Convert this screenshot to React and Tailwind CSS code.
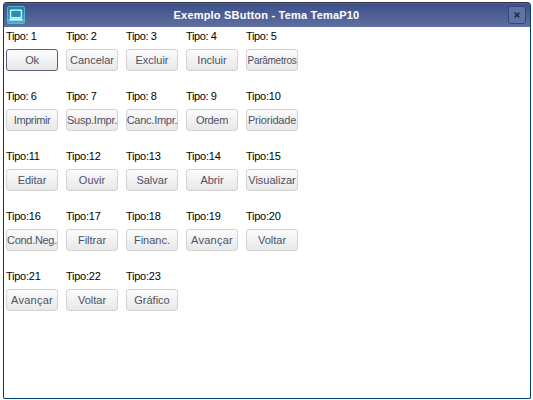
const buttons = [
  ["Tipo: 1", "Ok"], ["Tipo: 2", "Cancelar"], ["Tipo: 3", "Excluir"], ["Tipo: 4", "Incluir"], ["Tipo: 5", "Parâmetros"],
  ["Tipo: 6", "Imprimir"], ["Tipo: 7", "Susp.Impr."], ["Tipo: 8", "Canc.Impr."], ["Tipo: 9", "Ordem"], ["Tipo:10", "Prioridade"],
  ["Tipo:11", "Editar"], ["Tipo:12", "Ouvir"], ["Tipo:13", "Salvar"], ["Tipo:14", "Abrir"], ["Tipo:15", "Visualizar"],
  ["Tipo:16", "Cond.Neg."], ["Tipo:17", "Filtrar"], ["Tipo:18", "Financ."], ["Tipo:19", "Avançar"], ["Tipo:20", "Voltar"],
  ["Tipo:21", "Avançar"], ["Tipo:22", "Voltar"], ["Tipo:23", "Gráfico"],
];

// Letter spacing and size of the captions that need their own fit.
const captionFit = {
  "Ok": "text-[11px] tracking-[-0.3px]",
  "Parâmetros": "text-[10px] tracking-[-0.28px]",
  "Imprimir": "text-[11px] tracking-[-0.4px]",
  "Susp.Impr.": "text-[11px] tracking-[-0.25px]",
  "Canc.Impr.": "text-[11px] tracking-[-0.25px]",
  "Cond.Neg.": "text-[11px] tracking-[-0.3px]",
  "Ordem": "text-[11px] tracking-[-0.3px]",
  "Prioridade": "text-[11px] tracking-[-0.2px]",
  "Avançar": "text-[11px] tracking-[0.25px]",
};

function MonitorIcon() {
  return (
    <svg width="18" height="18" viewBox="0 0 18 18" className="shrink-0">
      <defs>
        <linearGradient id="tile" x1="0" y1="0" x2="0" y2="1">
          <stop offset="0" stopColor="#1486ae" />
          <stop offset="1" stopColor="#38b4d0" />
        </linearGradient>
      </defs>
      <rect x="0.5" y="0.5" width="17" height="17" rx="1.5" fill="url(#tile)" stroke="#5db4d2" />
      <rect x="3.6" y="4.2" width="10.8" height="7.4" rx="0.8" fill="#2a8fb2" stroke="#e9f7fa" strokeWidth="1.3" />
      <path d="M3 12.6h12l1 2H2z" fill="#f4fcfd" />
    </svg>
  );
}

function TitleBar() {
  return (
    <header className="flex h-[25px] items-center justify-between rounded-t-[3px] border-t border-[#30333d] bg-linear-to-b from-[#3c4f88] to-[#606fa0] pr-1 pl-[3px] shadow-[inset_0_1px_0_#59627e]">
      <MonitorIcon />
      <h1 className="text-[11px] leading-4 font-bold tracking-[0.2px] text-white">Exemplo SButton - Tema TemaP10</h1>
      <button aria-label="Fechar" className="flex size-[18px] items-center justify-center rounded-[3px] border border-[#34477c] bg-[#6172a5]">
        <svg width="6" height="6" viewBox="0 0 6 6">
          <path d="M.7.7l4.6 4.6M5.3.7L.7 5.3" stroke="#2c3141" strokeWidth="1.8" />
        </svg>
      </button>
    </header>
  );
}

export default function App() {
  return (
    <div className="h-[400px] w-[533px] bg-white pt-[2px] pl-[3px] font-['Liberation_Sans',Arial,sans-serif]">
      <main className="flex h-[397px] w-[528px] flex-col rounded-t-[4px] rounded-b-[2px] border-x border-b border-[#003c6c] bg-white">
        <TitleBar />
        <div className="grid grid-cols-[repeat(5,52px)] gap-x-2 pt-[3px] pl-[2px]">
          {buttons.map(([label, text], i) => (
            <div key={label} className="h-[60px]">
              <div className={`h-[19px] text-[11px] leading-3 whitespace-pre text-black ${i < 9 ? "tracking-[-0.38px]" : "tracking-[-0.25px]"}`}>
                {label}
              </div>
              <button
                className={`flex h-[22px] w-[52px] items-center justify-center rounded-[3px] border bg-linear-to-b from-[#fcfcfc] to-[#e8e8e8] whitespace-nowrap text-[#4d5164] ${
                  i === 0 ? "border-[#5a6178]" : "border-[#d3d3d3]"
                } ${captionFit[text] ?? "text-[11px] tracking-normal"}`}
              >
                {text}
              </button>
            </div>
          ))}
        </div>
      </main>
    </div>
  );
}
